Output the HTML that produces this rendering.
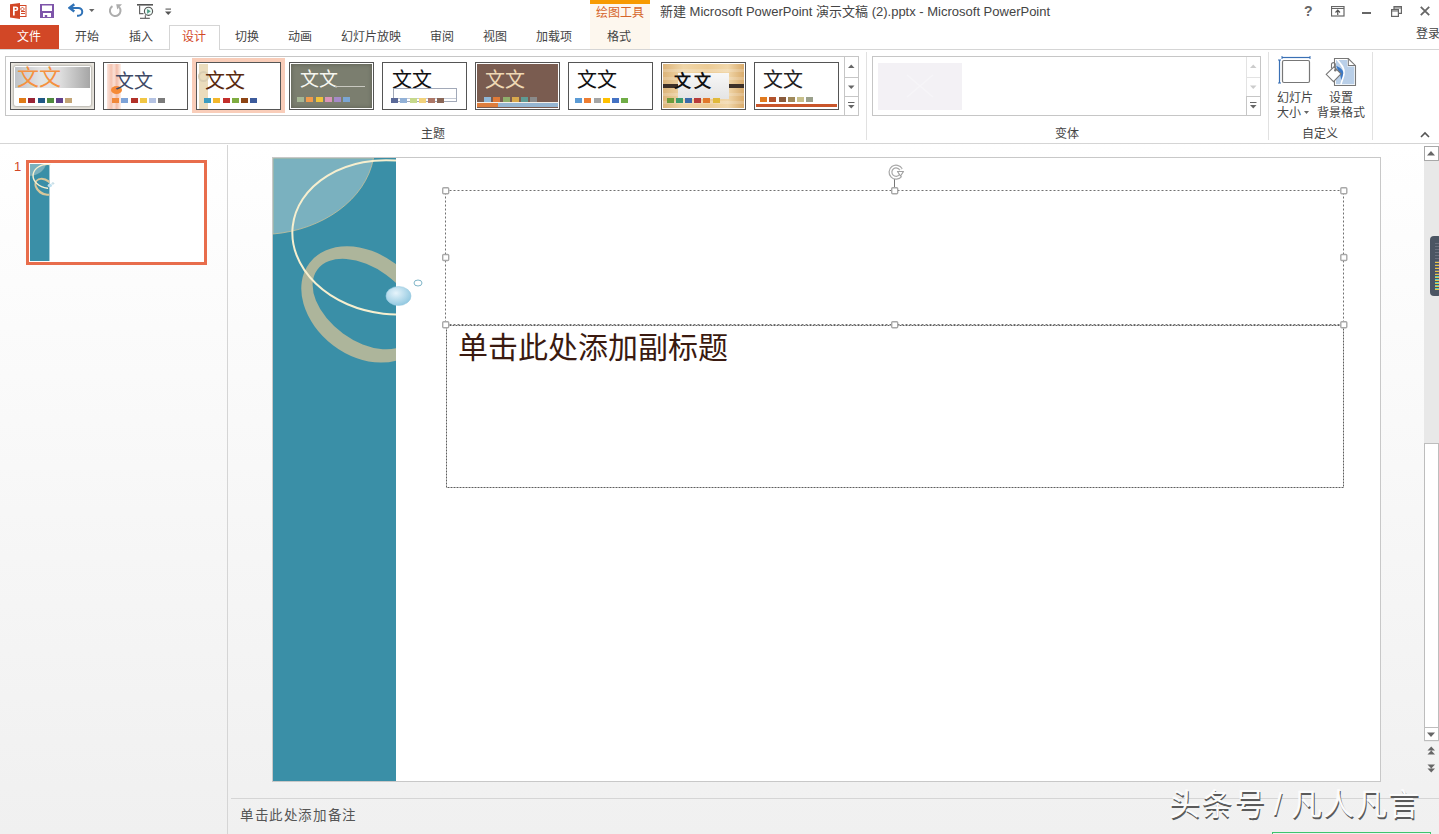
<!DOCTYPE html>
<html lang="zh-CN"><head><meta charset="utf-8">
<style>
*{margin:0;padding:0;box-sizing:border-box}
html,body{width:1439px;height:834px;overflow:hidden;background:#fff;font-family:"Liberation Sans",sans-serif;color:#444}
.a{position:absolute}
.t{position:absolute;white-space:nowrap;font-size:12px;line-height:12px}
.hl{position:absolute;background:#d5d5d5}
</style></head><body>
<!-- lower background gradient -->
<div class="a" style="left:0;top:144px;width:1439px;height:690px;background:linear-gradient(#fff,#f0f0f0)"></div>


<!-- QAT icons -->
<svg class="a" style="left:10px;top:3px" width="17" height="16" viewBox="0 0 17 16">
 <rect x="9.5" y="2.5" width="6.5" height="11" fill="#fff" stroke="#d24726" stroke-width="1"/>
 <rect x="11" y="8" width="4" height="1" fill="#d24726"/><rect x="11" y="10" width="4" height="1" fill="#d24726"/>
 <path d="M12.5 4.5 a1.6 1.6 0 1 1 -0.1 0" fill="none" stroke="#d24726" stroke-width="1"/>
 <polygon points="0,1.2 10,0 10,16 0,14.6" fill="#d24726"/>
 <path d="M3 3.5 h3 a2.2 2.2 0 0 1 0 4.6 h-1.3 v4.4 h-1.7z M4.7 5 v1.7 h1.1 a0.85 0.85 0 0 0 0 -1.7z" fill="#fff" fill-rule="evenodd"/>
</svg>
<svg class="a" style="left:40px;top:4px" width="14" height="14" viewBox="0 0 14 14">
 <path d="M0 0h14v14H0z M2 1.5v5.6h10V1.5z M3 8.9v4.1h1.8v-2h2.4v2H11V8.9z" fill="#7e55aa" fill-rule="evenodd"/>
</svg>
<svg class="a" style="left:68px;top:3px" width="16" height="15" viewBox="0 0 16 15">
 <path d="M2 4.9 H10.3 A3.95 3.95 0 0 1 10.3 12.8 H9" fill="none" stroke="#2f72b7" stroke-width="2"/>
 <path d="M6.3 1.3 L1.6 4.9 L6.3 8.5" fill="none" stroke="#2f72b7" stroke-width="2.4" stroke-linejoin="miter"/>
</svg>
<svg class="a" style="left:89px;top:9px" width="6" height="4" viewBox="0 0 6 4"><path d="M0 0h5.5L2.75 3z" fill="#666"/></svg>
<svg class="a" style="left:108px;top:3px" width="15" height="15" viewBox="0 0 15 15">
 <path d="M4.46 3.16 A5.3 5.3 0 1 0 11.2 4.2" fill="none" stroke="#adadad" stroke-width="2"/>
 <path d="M8.2 1.2 L14 1.3 L9.2 6.6z" fill="#adadad"/>
</svg>
<svg class="a" style="left:137px;top:4px" width="17" height="16" viewBox="0 0 17 16">
 <rect x="0" y="0" width="16" height="1.6" fill="#555"/>
 <path d="M2.6 1.5 V9.6 H6.5" fill="none" stroke="#666" stroke-width="1.2"/>
 <circle cx="11.5" cy="7.3" r="4.1" fill="#eefaf6" stroke="#555" stroke-width="1.1"/>
 <path d="M10.1 4.9 L13.8 7.3 L10.1 9.7z" fill="#4e9e86"/>
 <path d="M3 14.3 H12.8" stroke="#555" stroke-width="1.1"/><path d="M8.3 11.2 L8.3 14" stroke="#555" stroke-width="1"/>
</svg>
<svg class="a" style="left:165px;top:8px" width="7" height="8" viewBox="0 0 7 8"><rect x="0.5" y="0.5" width="5.5" height="1.2" fill="#666"/><path d="M0 3.5h6.5L3.25 7z" fill="#555"/></svg>

<!-- window controls -->
<div class="t" style="left:1304px;top:4px;font-size:14px;line-height:14px;font-weight:bold;color:#666">?</div>
<svg class="a" style="left:1331px;top:6px" width="14" height="11" viewBox="0 0 14 11">
 <rect x="0.5" y="0.5" width="12.5" height="9.5" fill="none" stroke="#666" stroke-width="1.2"/><path d="M0.5 2.5h12.5" stroke="#666" stroke-width="1"/>
 <path d="M6.75 9 V4.5 M4.5 6.5 L6.75 4.2 L9 6.5" fill="none" stroke="#555" stroke-width="1.2"/>
</svg>
<div class="a" style="left:1362px;top:12px;width:9px;height:2px;background:#666"></div>
<svg class="a" style="left:1391px;top:6px" width="11" height="11" viewBox="0 0 11 11">
 <rect x="0.6" y="3.6" width="6.8" height="6.8" fill="#fff" stroke="#666" stroke-width="1.2"/>
 <path d="M3 3.5 V0.6 H10.4 V7.4 H7.5" fill="none" stroke="#666" stroke-width="1.2"/><path d="M0.6 5h6.8 M3 2h7.4" stroke="#666" stroke-width="1"/>
</svg>
<svg class="a" style="left:1420px;top:6px" width="10" height="10" viewBox="0 0 10 10"><path d="M0.8 0.8 L9.2 9.2 M9.2 0.8 L0.8 9.2" stroke="#666" stroke-width="1.8"/></svg>

<!-- title bar -->
<div class="t" style="left:660px;top:5px;font-size:13px;line-height:13px;color:#444">新建 Microsoft PowerPoint 演示文稿 (2).pptx - Microsoft PowerPoint</div>

<!-- contextual tab -->
<div class="a" style="left:590px;top:0;width:60px;height:4px;background:#f79a00"></div>
<div class="a" style="left:590px;top:4px;width:60px;height:45px;background:#fdf7ee"></div>
<div class="t" style="left:596px;top:7px;font-size:12px;color:#d5652a">绘图工具</div>
<div class="t" style="left:607px;top:31px;color:#444">格式</div>

<!-- tabs -->
<div class="a" style="left:0;top:25px;width:59px;height:24px;background:#d24726"></div>
<div class="t" style="left:17px;top:31px;color:#fff">文件</div>
<div class="t" style="left:75px;top:31px">开始</div>
<div class="t" style="left:129px;top:31px">插入</div>
<div class="a" style="left:169px;top:25px;width:51px;height:25px;border:1px solid #d5d5d5;border-bottom:none;background:#fff;z-index:2"></div>
<div class="t" style="left:182px;top:31px;color:#d24726;z-index:3">设计</div>
<div class="t" style="left:235px;top:31px">切换</div>
<div class="t" style="left:288px;top:31px">动画</div>
<div class="t" style="left:341px;top:31px">幻灯片放映</div>
<div class="t" style="left:430px;top:31px">审阅</div>
<div class="t" style="left:483px;top:31px">视图</div>
<div class="t" style="left:536px;top:31px">加载项</div>
<div class="t" style="left:1416px;top:28px">登录</div>
<div class="hl" style="left:0;top:49px;width:1439px;height:1px"></div>
<div class="hl" style="left:0;top:143px;width:1439px;height:1px"></div>

<!-- gallery -->
<div class="a" style="left:5px;top:56px;width:854px;height:60px;border:1px solid #c6c6c6"></div>
<div class="a" style="left:844px;top:56px;width:15px;height:60px;border:1px solid #c6c6c6"></div>
<!-- thumbnails -->
<div class="a" style="left:192px;top:58px;width:93px;height:55px;background:#f9cdb9"></div><div class="a" style="left:10px;top:62px;width:85px;height:48px;border:1px solid #555;background:#e9e6df;overflow:hidden"><div class="a" style="left:3px;top:3px;width:77px;height:40px;border-radius:2px;background:#fff;box-shadow:0 0 2px 1px #b8b5ae"></div><div class="a" style="left:4px;top:4px;width:75px;height:21px;background:linear-gradient(90deg,#bfc3c8,#e4e4e4 35%,#dedede 60%,#a6a6a6)"></div><div class="t" style="left:6px;top:4px;font-size:22px;line-height:22px;color:#f5913f;font-weight:300">文文</div><div class="a" style="left:8px;top:35px;width:7px;height:5px;background:#e07b17"></div><div class="a" style="left:17px;top:35px;width:7px;height:5px;background:#9a2436"></div><div class="a" style="left:27px;top:35px;width:7px;height:5px;background:#1f5886"></div><div class="a" style="left:36px;top:35px;width:7px;height:5px;background:#4f8a3f"></div><div class="a" style="left:45px;top:35px;width:7px;height:5px;background:#61408b"></div><div class="a" style="left:54px;top:35px;width:7px;height:5px;background:#c3a576"></div></div><div class="a" style="left:103px;top:62px;width:85px;height:48px;border:1px solid #555;background:#fff;overflow:hidden"><div class="a" style="left:3px;top:1px;width:14px;height:45px;background:linear-gradient(90deg,#fbe4dc,#f4c3b0 30%,#fae0d6 50%,#f2bca8 70%,#fdf0ea)"></div><div class="a" style="left:7px;top:23px;width:11px;height:8px;border-radius:50%;background:#f58a36"></div><div class="t" style="left:11px;top:9px;font-size:19px;line-height:19px;color:#3e4a66;font-weight:300">文文</div><div class="a" style="left:8px;top:35px;width:7px;height:5px;background:#f0883a"></div><div class="a" style="left:17px;top:35px;width:7px;height:5px;background:#7ea4d9"></div><div class="a" style="left:27px;top:35px;width:7px;height:5px;background:#b2322a"></div><div class="a" style="left:36px;top:35px;width:7px;height:5px;background:#f1c644"></div><div class="a" style="left:45px;top:35px;width:7px;height:5px;background:#b5c3e3"></div><div class="a" style="left:54px;top:35px;width:7px;height:5px;background:#7b7b7b"></div></div><div class="a" style="left:196px;top:62px;width:85px;height:48px;border:1px solid #555;background:#fff;overflow:hidden"><div class="a" style="left:2px;top:1px;width:9px;height:45px;background:#eadcbc"></div><div class="a" style="left:1px;top:8px;width:11px;height:11px;border-radius:50%;border:2px solid #d9cdb1"></div><div class="t" style="left:8px;top:8px;font-size:20px;line-height:20px;color:#5a2a0f">文文</div><div class="a" style="left:7px;top:35px;width:7px;height:5px;background:#3a9cc0"></div><div class="a" style="left:16px;top:35px;width:7px;height:5px;background:#f3b72a"></div><div class="a" style="left:26px;top:35px;width:7px;height:5px;background:#c32f2c"></div><div class="a" style="left:35px;top:35px;width:7px;height:5px;background:#7fac40"></div><div class="a" style="left:44px;top:35px;width:7px;height:5px;background:#8e4514"></div><div class="a" style="left:53px;top:35px;width:7px;height:5px;background:#3d5b9c"></div></div><div class="a" style="left:289px;top:62px;width:85px;height:48px;border:1px solid #555;background:#fff;overflow:hidden"><div class="a" style="left:1px;top:1px;width:81px;height:44px;background:#7b7e6f;box-shadow:inset 0 0 4px #5a5c50"></div><div class="t" style="left:10px;top:7px;font-size:19px;line-height:19px;color:#f6f6f0;font-weight:400">文文</div><div class="a" style="left:45px;top:23px;width:30px;height:1px;background:#c8c8c0"></div><div class="a" style="left:7px;top:34px;width:7px;height:5px;background:#a5b694"></div><div class="a" style="left:16px;top:34px;width:7px;height:5px;background:#f09b4c"></div><div class="a" style="left:26px;top:34px;width:7px;height:5px;background:#efc23c"></div><div class="a" style="left:35px;top:34px;width:7px;height:5px;background:#d894b9"></div><div class="a" style="left:44px;top:34px;width:7px;height:5px;background:#a48ac8"></div><div class="a" style="left:53px;top:34px;width:7px;height:5px;background:#7aa6d4"></div></div><div class="a" style="left:382px;top:62px;width:85px;height:48px;border:1px solid #555;background:#fff;overflow:hidden"><div class="t" style="left:9px;top:7px;font-size:20px;line-height:20px;color:#111;font-weight:300">文文</div><div class="a" style="left:10px;top:25px;width:64px;height:14px;border:1px solid #a2a9b8"></div><div class="a" style="left:11px;top:35px;width:62px;height:1px;background:#c4c9d4"></div><div class="a" style="left:8px;top:35px;width:7px;height:5px;background:#5b6a99"></div><div class="a" style="left:17px;top:35px;width:7px;height:5px;background:#92b1d7"></div><div class="a" style="left:27px;top:35px;width:7px;height:5px;background:#c6d98b"></div><div class="a" style="left:36px;top:35px;width:7px;height:5px;background:#f2d27b"></div><div class="a" style="left:45px;top:35px;width:7px;height:5px;background:#ad7767"></div><div class="a" style="left:54px;top:35px;width:7px;height:5px;background:#8a6757"></div></div><div class="a" style="left:475px;top:62px;width:85px;height:48px;border:1px solid #555;background:#fff;overflow:hidden"><div class="a" style="left:1px;top:1px;width:81px;height:44px;background:#7a5c50"></div><div class="t" style="left:9px;top:7px;font-size:20px;line-height:20px;color:#efd8b4;font-weight:300">文文</div><div class="a" style="left:1px;top:39px;width:81px;height:1px;background:#f4efe9"></div><div class="a" style="left:1px;top:40px;width:81px;height:4px;background:#95b6d2"></div><div class="a" style="left:1px;top:40px;width:21px;height:4px;background:#de7d3c"></div><div class="a" style="left:8px;top:34px;width:7px;height:5px;background:#8fb7d7"></div><div class="a" style="left:17px;top:34px;width:7px;height:5px;background:#e07a37"></div><div class="a" style="left:27px;top:34px;width:7px;height:5px;background:#8fae6b"></div><div class="a" style="left:36px;top:34px;width:7px;height:5px;background:#d8a84c"></div><div class="a" style="left:45px;top:34px;width:7px;height:5px;background:#5e9b93"></div><div class="a" style="left:54px;top:34px;width:7px;height:5px;background:#8a8a8a"></div></div><div class="a" style="left:568px;top:62px;width:85px;height:48px;border:1px solid #555;background:#fff;overflow:hidden"><div class="t" style="left:8px;top:7px;font-size:20px;line-height:20px;color:#111;font-weight:300">文文</div><div class="a" style="left:6px;top:35px;width:7px;height:5px;background:#5b9bd5"></div><div class="a" style="left:15px;top:35px;width:7px;height:5px;background:#ed7d31"></div><div class="a" style="left:25px;top:35px;width:7px;height:5px;background:#a5a5a5"></div><div class="a" style="left:34px;top:35px;width:7px;height:5px;background:#ffc000"></div><div class="a" style="left:43px;top:35px;width:7px;height:5px;background:#4472c4"></div><div class="a" style="left:52px;top:35px;width:7px;height:5px;background:#70ad47"></div></div><div class="a" style="left:661px;top:62px;width:85px;height:48px;border:1px solid #555;background:#fff;overflow:hidden"><div class="a" style="left:1px;top:1px;width:81px;height:44px;background:linear-gradient(90deg,#dcb47a,#f0d6a8 25%,#eccb95 55%,#f1d7aa 80%,#d9ab6c)"></div><div class="a" style="left:1px;top:1px;width:81px;height:44px;background:repeating-linear-gradient(rgba(255,255,255,0) 0 5px,rgba(255,255,255,0.18) 5px 8px)"></div><div class="a" style="left:1px;top:21px;width:81px;height:4px;background:#3d3028"></div><div class="a" style="left:16px;top:10px;width:51px;height:26px;background:linear-gradient(#f7f7f7,#e4e4e4)"></div><div class="t" style="left:12px;top:10px;font-size:17px;line-height:17px;color:#111;font-weight:bold;letter-spacing:3px">文文</div><div class="a" style="left:5px;top:35px;width:7px;height:5px;background:#6e9b3a"></div><div class="a" style="left:14px;top:35px;width:7px;height:5px;background:#3c9a6c"></div><div class="a" style="left:23px;top:35px;width:7px;height:5px;background:#3b6aa9"></div><div class="a" style="left:32px;top:35px;width:7px;height:5px;background:#b73a3a"></div><div class="a" style="left:41px;top:35px;width:7px;height:5px;background:#e0782b"></div><div class="a" style="left:51px;top:35px;width:7px;height:5px;background:#e1b93a"></div></div><div class="a" style="left:754px;top:62px;width:85px;height:48px;border:1px solid #555;background:#fff;overflow:hidden"><div class="t" style="left:8px;top:7px;font-size:20px;line-height:20px;color:#222;font-weight:300">文文</div><div class="a" style="left:5px;top:34px;width:7px;height:5px;background:#e07a1f"></div><div class="a" style="left:14px;top:34px;width:7px;height:5px;background:#b3532d"></div><div class="a" style="left:24px;top:34px;width:7px;height:5px;background:#8a5b3c"></div><div class="a" style="left:33px;top:34px;width:7px;height:5px;background:#a08a5b"></div><div class="a" style="left:42px;top:34px;width:7px;height:5px;background:#c8c08b"></div><div class="a" style="left:51px;top:34px;width:7px;height:5px;background:#9aa08b"></div><div class="a" style="left:1px;top:41px;width:81px;height:3px;background:#c9552a"></div></div><div class="hl" style="left:845px;top:77px;width:13px;height:1px;background:#c6c6c6"></div><div class="hl" style="left:845px;top:96px;width:13px;height:1px;background:#c6c6c6"></div><svg class="a" style="left:848px;top:64px" width="7" height="5" viewBox="0 0 7 5"><path d="M0 4h6.5L3.25 0.5z" fill="#666"/></svg><svg class="a" style="left:848px;top:85px" width="7" height="5" viewBox="0 0 7 5"><path d="M0 0.5h6.5L3.25 4z" fill="#666"/></svg><svg class="a" style="left:848px;top:102px" width="7" height="8" viewBox="0 0 7 8"><rect x="0" y="0" width="6.5" height="1" fill="#666"/><path d="M0 3h6.5L3.25 6.5z" fill="#666"/></svg><div class="a" style="left:878px;top:63px;width:84px;height:47px;background:#f3f1f5"></div><svg class="a" style="left:905px;top:73px" width="30" height="26"><path d="M2 2 L28 24 M28 2 L2 24" stroke="#f6f5f8" stroke-width="1.5"/></svg><div class="hl" style="left:1246px;top:57px;width:1px;height:58px;background:#e3e3e3"></div><div class="hl" style="left:1247px;top:77px;width:13px;height:1px;background:#e3e3e3"></div><div class="hl" style="left:1247px;top:96px;width:13px;height:1px;background:#c6c6c6"></div><div class="hl" style="left:1246px;top:96px;width:1px;height:19px;background:#c6c6c6"></div><svg class="a" style="left:1250px;top:64px" width="7" height="5" viewBox="0 0 7 5"><path d="M0 4h6.5L3.25 0.5z" fill="#ccc"/></svg><svg class="a" style="left:1250px;top:85px" width="7" height="5" viewBox="0 0 7 5"><path d="M0 0.5h6.5L3.25 4z" fill="#ccc"/></svg><svg class="a" style="left:1250px;top:102px" width="7" height="8" viewBox="0 0 7 8"><rect x="0" y="0" width="6.5" height="1" fill="#666"/><path d="M0 3h6.5L3.25 6.5z" fill="#666"/></svg>
<div class="t" style="left:421px;top:128px">主题</div>
<div class="hl" style="left:866px;top:52px;width:1px;height:88px;background:#e1e1e1"></div>

<div class="a" style="left:872px;top:56px;width:389px;height:60px;border:1px solid #c6c6c6"></div>
<div class="t" style="left:1055px;top:128px">变体</div>
<div class="hl" style="left:1268px;top:52px;width:1px;height:88px;background:#e1e1e1"></div>
<div class="t" style="left:1302px;top:128px">自定义</div>
<div class="hl" style="left:1372px;top:52px;width:1px;height:88px;background:#e1e1e1"></div>

<!-- left panel -->
<div class="t" style="left:14px;top:161px;font-size:13px;color:#d24726">1</div>
<div class="a" style="left:26px;top:160px;width:181px;height:105px;border:3px solid #e86d4c;background:#fff"></div>
<svg class="a" style="left:30px;top:164px" width="175" height="97" viewBox="273 158 1107 623" preserveAspectRatio="none">
 <defs><clipPath id="strip2"><rect x="273" y="158" width="123" height="623"/></clipPath></defs>
 <rect x="273" y="158" width="123" height="623" fill="#3a8fa7"/>
 <g clip-path="url(#strip2)">
  <path d="M273 158 H373.5 C366 200 322 230 273 234 Z" fill="#7ab1bf" stroke="#c7c09a" stroke-width="1"/>
  <path d="M418.5 345.9 A68.5 51.2 37.3 1 0 309.5 262.9 A68.5 51.2 37.3 1 0 418.5 345.9Z M411.7 338.5 A58.4 36.4 36.0 1 0 317.3 269.7 A58.4 36.4 36.0 1 0 411.7 338.5Z" fill="#d8c79a" fill-rule="evenodd"/>
 </g>
 <ellipse cx="391.8" cy="237.3" rx="99.7" ry="76.8" transform="rotate(6.3 391.8 237.3)" fill="none" stroke="#f7efcf" stroke-width="9" clip-path="url(#strip2)"/>
 <path d="M396 300 A99.7 76.8 6.3 0 1 396 160" fill="none" stroke="#fff" stroke-width="0"/>
 <ellipse cx="398.5" cy="296" rx="14" ry="11" fill="#bfe0ef"/>
 <ellipse cx="418" cy="283" rx="6" ry="5" fill="none" stroke="#7fb5c8" stroke-width="3"/>
</svg>
<div class="hl" style="left:227px;top:145px;width:1px;height:689px"></div>

<!-- slide -->
<div class="a" style="left:272px;top:157px;width:1109px;height:625px;border:1px solid #c8c8c8;background:#fff"></div>
<div class="a" style="left:273px;top:158px;width:123px;height:623px;background:#3a8fa7"></div>

<div class="hl" style="left:231px;top:798px;width:1208px;height:1px"></div>
<div class="t" style="left:240px;top:809px;font-size:13.5px;line-height:14px;letter-spacing:1.6px;color:#555">单击此处添加备注</div>

<!-- customize group icons -->
<svg class="a" style="left:1278px;top:56px" width="34" height="28" viewBox="0 0 34 28">
 <path d="M4 1.5 H32" stroke="#3a70b5" stroke-width="1.2"/><path d="M4 0 v3 M32 0 v3" stroke="#3a70b5" stroke-width="1"/>
 <path d="M1.5 4 V27" stroke="#3a70b5" stroke-width="1.2"/><path d="M0 4 h3 M0 27 h3" stroke="#3a70b5" stroke-width="1"/>
 <rect x="4.5" y="4.5" width="27" height="22" rx="1.5" fill="#fff" stroke="#777" stroke-width="1.2"/>
</svg>
<svg class="a" style="left:1325px;top:57px" width="32" height="30" viewBox="0 0 32 30">
 <path d="M9.5 1.5 H23.3 L30.5 8.7 V28.5 H9.5 Z" fill="#fff" stroke="#777" stroke-width="1.1"/>
 <path d="M23.3 1.5 V8.5 H30.5" fill="none" stroke="#777" stroke-width="1.1"/>
 <path d="M11 3 H22.3 V9.6 H29.3 V27.3 H11 Z" fill="#b9cfe8"/>
 <path d="M12 2.5 C17 8 20 12 19 17 C18.3 21 16.5 24 16 27.5" fill="none" stroke="#fff" stroke-width="1.6"/>
 <path d="M11.2 8.8 C15 10.5 18.8 13 18.2 16.5 C17.8 19.5 16.8 21.5 16.2 23 C15.6 20 15.6 17.5 13.8 15.5 Z" fill="#3b78c4"/>
 <path d="M1.2 17.3 L9 9.8 L16 16.8 L8.5 24.6 Z" fill="#fff" stroke="#777" stroke-width="1.1"/>
 <path d="M10.3 13 V7 A2 2 0 0 0 6.5 7 V11.5" fill="none" stroke="#777" stroke-width="1.1"/>
 <circle cx="10.3" cy="13.3" r="1.2" fill="#777"/>
</svg>
<div class="t" style="left:1277px;top:92px">幻灯片</div>
<div class="t" style="left:1277px;top:107px">大小</div>
<svg class="a" style="left:1304px;top:111px" width="5" height="3" viewBox="0 0 5 3"><path d="M0 0h5L2.5 3z" fill="#666"/></svg>
<div class="t" style="left:1329px;top:92px">设置</div>
<div class="t" style="left:1317px;top:107px">背景格式</div>
<svg class="a" style="left:1420px;top:131px" width="10" height="7" viewBox="0 0 10 7"><path d="M1 6 L5 2 L9 6" fill="none" stroke="#555" stroke-width="1.6"/></svg>

<!-- right scrollbar -->
<div class="a" style="left:1424px;top:160px;width:15px;height:582px;background:#e8e8e8"></div>
<div class="a" style="left:1424px;top:146px;width:15px;height:15px;background:#fff;border:1px solid #a8a8a8"></div>
<svg class="a" style="left:1427px;top:150px" width="9" height="6" viewBox="0 0 9 6"><path d="M0 5.5h8L4 1z" fill="#666"/></svg>
<div class="a" style="left:1424px;top:443px;width:15px;height:285px;background:#fff;border:1px solid #bdbdbd"></div>
<div class="a" style="left:1424px;top:727px;width:15px;height:14px;background:#fff;border:1px solid #bdbdbd"></div>
<svg class="a" style="left:1427px;top:732px" width="9" height="6" viewBox="0 0 9 6"><path d="M0 0.5h8L4 5z" fill="#666"/></svg>
<svg class="a" style="left:1427px;top:746px" width="9" height="9" viewBox="0 0 9 9"><path d="M0.5 4.5h7.5L4.25 0.5z M0.5 8.5h7.5L4.25 4.5z" fill="#666"/></svg>
<svg class="a" style="left:1427px;top:764px" width="9" height="9" viewBox="0 0 9 9"><path d="M0.5 0.5h7.5L4.25 4.5z M0.5 4.5h7.5L4.25 8.5z" fill="#666"/></svg>
<!-- side gadget -->
<div class="a" style="left:1430px;top:236px;width:12px;height:60px;border-radius:4px;background:#4b5563"></div>
<div class="a" style="left:1435px;top:243px;width:4px;height:47px;background:repeating-linear-gradient(#6b7280 0 1px,transparent 1px 3px)"></div>
<div class="a" style="left:1435px;top:262px;width:4px;height:28px;background:repeating-linear-gradient(#e8c547 0 1px,transparent 1px 3px)"></div>
<div class="a" style="left:1435px;top:276px;width:4px;height:14px;background:repeating-linear-gradient(#5fd0c0 0 1px,transparent 1px 3px)"></div>

<!-- slide art -->
<svg class="a" style="left:273px;top:158px" width="160" height="623" viewBox="273 158 160 623">
 <defs>
  <clipPath id="strip"><rect x="273" y="158" width="123" height="623"/></clipPath>
  <radialGradient id="bub" cx="0.4" cy="0.35" r="0.7"><stop offset="0" stop-color="#e6f4fb"/><stop offset="1" stop-color="#8ec6df"/></radialGradient>
 </defs>
 <g clip-path="url(#strip)">
  <path d="M273 158 H373.5 C366 200 322 230 273 234 Z" fill="#7ab1bf" stroke="#c7c09a" stroke-width="0.8"/>
  <path d="M418.5 345.9 A68.5 51.2 37.3 1 0 309.5 262.9 A68.5 51.2 37.3 1 0 418.5 345.9Z M411.7 338.5 A58.4 36.4 36.0 1 0 317.3 269.7 A58.4 36.4 36.0 1 0 411.7 338.5Z" fill="#adb59b" fill-rule="evenodd"/>
  <ellipse cx="391.8" cy="237.3" rx="99.7" ry="76.8" transform="rotate(6.3 391.8 237.3)" fill="none" stroke="#f7efcf" stroke-width="2"/>
 </g>
 <ellipse cx="398.5" cy="296" rx="12.5" ry="9.5" fill="url(#bub)" stroke="#9bcbe0" stroke-width="0.6"/>
 <ellipse cx="418" cy="283" rx="4" ry="3" fill="none" stroke="#7fb5c8" stroke-width="1"/>
</svg>

<!-- placeholders -->
<svg class="a" style="left:0;top:0" width="1439" height="834">
 <rect x="445.5" y="190.5" width="898" height="134" fill="none" stroke="#707070" stroke-width="1" stroke-dasharray="2 2"/>
 <rect x="446.5" y="325.5" width="897" height="162" fill="none" stroke="#5e5e5e" stroke-width="1" stroke-dasharray="2 1"/>
 <g fill="#fff" stroke="#a8a8a8" stroke-width="1.4">
  <rect x="442.7" y="187.7" width="6" height="6" rx="1"/>
  <rect x="891.7" y="187.7" width="6" height="6" rx="1"/>
  <rect x="1340.8" y="187.7" width="6" height="6" rx="1"/>
  <rect x="442.7" y="254.5" width="6" height="6" rx="1"/>
  <rect x="1340.8" y="254.5" width="6" height="6" rx="1"/>
  <rect x="442.7" y="321.8" width="6" height="6" rx="1"/>
  <rect x="891.7" y="321.8" width="6" height="6" rx="1"/>
  <rect x="1340.8" y="321.8" width="6" height="6" rx="1"/>
 </g>
 <path d="M894.5 177 V187" stroke="#777" stroke-width="1"/>
 <path d="M900.6 175.5 A5.6 5.6 0 1 1 901 169.5" fill="none" stroke="#a8a8a8" stroke-width="4"/>
 <path d="M900.6 175.5 A5.6 5.6 0 1 1 901 169.5" fill="none" stroke="#fff" stroke-width="1.6"/>
 <path d="M897.5 171.5 L903.5 171.5 L900.5 176z" fill="#fff" stroke="#a0a0a0" stroke-width="1.2" stroke-linejoin="round"/>
</svg>
<div class="t" style="left:458px;top:333px;font-size:30px;line-height:30px;color:#3a1a10;font-weight:500;font-family:'Liberation Serif',serif">单击此处添加副标题</div>

<!-- watermark -->
<div class="t" style="left:1169px;top:789px;font-size:31px;line-height:31px;letter-spacing:1.5px;word-spacing:-3px;color:#fbfbfb;text-shadow:0.7px 1.5px 0.2px #5a5a5a;font-weight:300">头条号 / 凡人凡言</div>
<div class="a" style="left:1272px;top:832px;width:159px;height:4px;border:1px solid #3ec46d;border-bottom:none"></div>
</body></html>
